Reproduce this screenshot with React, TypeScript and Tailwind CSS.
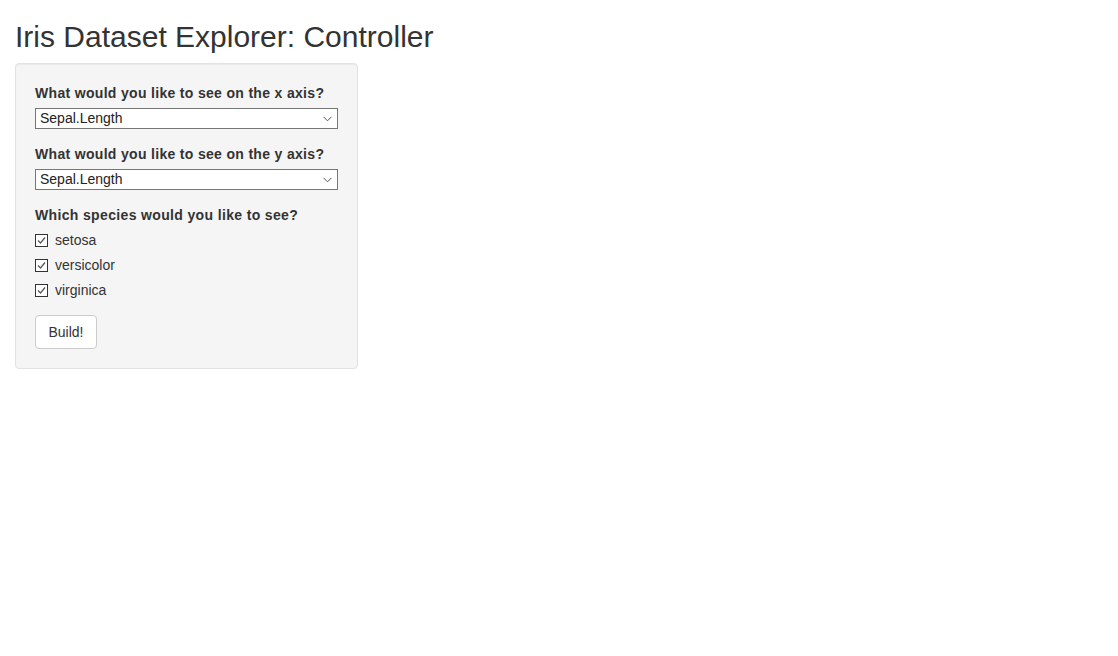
import React, { useState } from "react";

const vars = ["Sepal.Length", "Sepal.Width", "Petal.Length", "Petal.Width"];
const species = ["setosa", "versicolor", "virginica"];

const Chevron = () => (
  <svg width="9" height="6" viewBox="0 0 9 6" className="pointer-events-none absolute right-[6px] top-[8px]">
    <path d="M0.5 0.8 L4.5 4.8 L8.5 0.8" fill="none" stroke="#555" strokeWidth="1" />
  </svg>
);

function SelectInput({ label, value, onChange }: { label: string; value: string; onChange: (v: string) => void }) {
  return (
    <div className="mb-[15px] w-full">
      <label className="mb-[5px] block text-[14px] font-bold leading-[20px] tracking-[0.32px]">{label}</label>
      <div className="relative">
        <select
          value={value}
          onChange={(e) => onChange(e.target.value)}
          className="block h-[21px] w-full appearance-none border border-[#767676] bg-white pl-[4px] text-[14px] leading-[19px] text-[#222] outline-none"
        >
          {vars.map((v) => (
            <option key={v}>{v}</option>
          ))}
        </select>
        <Chevron />
      </div>
    </div>
  );
}

export default function App() {
  const [x, setX] = useState("Sepal.Length");
  const [y, setY] = useState("Sepal.Length");
  const [checked, setChecked] = useState<Record<string, boolean>>({ setosa: true, versicolor: true, virginica: true });

  return (
    <div className="min-h-screen bg-white px-[15px] text-[#333]" style={{ fontFamily: '"Liberation Sans", Arial, sans-serif' }}>
      <h2 className="mb-[10px] mt-[20px] text-[30px] font-medium leading-[33px]">Iris Dataset Explorer: Controller</h2>

      <div className="mb-[20px] w-[343px] rounded-[4px] border border-[#e3e3e3] bg-[#f5f5f5] p-[19px] shadow-[inset_0_1px_1px_rgba(0,0,0,0.05)]">
        <SelectInput label="What would you like to see on the x axis?" value={x} onChange={setX} />
        <SelectInput label="What would you like to see on the y axis?" value={y} onChange={setY} />

        <div className="mb-[15px]">
          <label className="mb-[5px] block text-[14px] font-bold leading-[20px] tracking-[0.35px]">Which species would you like to see?</label>
          <div className="flex flex-col gap-[5px]">
            {species.map((s) => (
              <label
                key={s}
                className="flex h-[20px] cursor-pointer items-center text-[14px] leading-[20px]"
                onClick={() => setChecked((c) => ({ ...c, [s]: !c[s] }))}
              >
                <span className="mr-[7px] flex h-[13px] w-[13px] items-center justify-center border border-[#333] bg-white">
                  {checked[s] && (
                    <svg width="11" height="11" viewBox="0 0 11 11">
                      <path d="M2 5.5 L4.5 8 L9 2.5" fill="none" stroke="#555" strokeWidth="1.2" />
                    </svg>
                  )}
                </span>
                {s}
              </label>
            ))}
          </div>
        </div>

        <button className="block h-[34px] w-[62px] rounded-[4px] border border-[#ccc] bg-white text-center text-[14px] leading-[20px] text-[#333]">
          Build!
        </button>
      </div>
    </div>
  );
}
